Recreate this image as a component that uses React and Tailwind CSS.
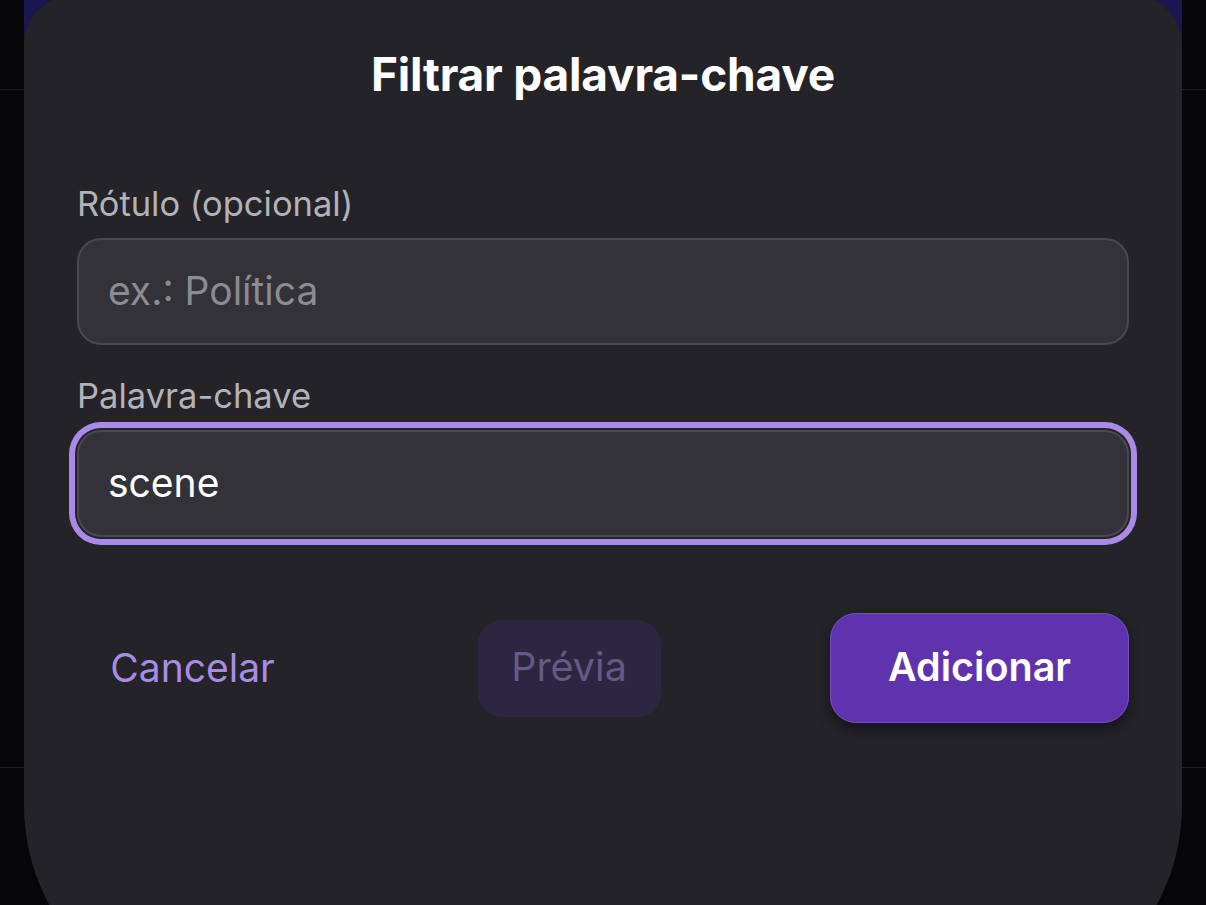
import React from "react";

function SideStrip() {
  return (
    <div className="flex w-[24px] shrink-0 flex-col">
      <div className="h-[90px] border-b border-[#1d1d21]" />
      <div className="h-[678px] border-b border-[#1d1d21]" />
      <div className="flex-1" />
    </div>
  );
}

export default function App() {
  return (
    <div className="flex h-[905px] w-[1206px] overflow-hidden bg-[#060608] font-['Inter',sans-serif]">
      <SideStrip />

      <div className="flex-1 bg-[linear-gradient(to_bottom,#1b1650_0px,#1b1650_60px,#060608_60px)]">
        <div className="-mt-[5px] h-[1020px] rounded-t-[50px] rounded-b-[210px] bg-[#242328] px-[53px] pt-[53px]">
          <h1 className="text-center text-[46px] leading-[52px] font-bold tracking-[-0.2px] text-white">
            Filtrar palavra-chave
          </h1>

          <div className="mt-[86px] flex flex-col">
            <label className="text-[34.5px] leading-[36px] text-[#b3b2b8]">Rótulo (opcional)</label>
            <div className="mt-[16px] flex h-[107px] items-center rounded-[24px] border-2 border-[#4a494f] bg-[#333238] pl-[29px]">
              <span className="text-[39px] text-[#8c8b91]">ex.: Política</span>
            </div>

            <label className="mt-[33px] text-[34.5px] leading-[36px] text-[#b3b2b8]">Palavra-chave</label>
            <div className="mt-[16px] flex h-[107px] items-center rounded-[24px] border-2 border-[#4a494f] bg-[#333238] pl-[29px] shadow-[0_0_0_2px_#242328,0_0_0_8px_#a98ae6]">
              <span className="text-[39px] text-white">scene</span>
            </div>
          </div>

          <div className="mt-[76px] flex items-center justify-between">
            <button className="w-[231px] text-center text-[39px] text-[#a98be6]">Cancelar</button>
            <button className="flex h-[97px] w-[183px] items-center justify-center rounded-[24px] bg-[#2d2640] text-[39.5px] text-[#655986]">
              Prévia
            </button>
            <button className="flex h-[110px] w-[299px] items-center justify-center rounded-[26px] border border-[#7550c2] bg-[#5f33ae] text-[39.5px] font-semibold text-white shadow-[0_6px_14px_rgba(0,0,0,0.45)]">
              Adicionar
            </button>
          </div>
        </div>
      </div>

      <SideStrip />
    </div>
  );
}
